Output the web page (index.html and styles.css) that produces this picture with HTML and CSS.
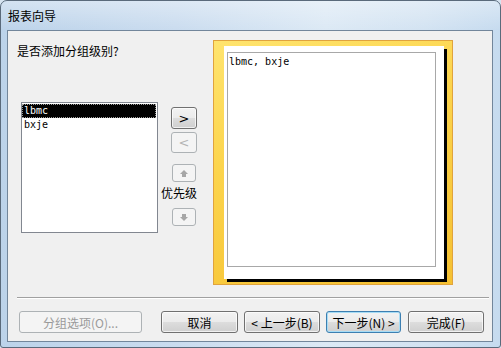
FILE: index.html
```html
<!DOCTYPE html>
<html lang="zh-CN">
<head>
  <meta charset="UTF-8">
  <title>报表向导</title>
  <link rel="stylesheet" href="styles.css">
</head>
<body>
  <div class="window">
    <div class="titlebar">报表向导</div>

    <div class="client">
      <div class="main">
        <!-- Field list and ordering -->
        <div class="left">
          <p class="question">是否添加分组级别?</p>
          <div class="pick">
            <ul class="listbox">
              <li class="sel">lbmc</li>
              <li>bxje</li>
            </ul>
            <div class="order">
              <button class="btn arrow">&gt;</button>
              <button class="btn arrow" disabled>&lt;</button>
              <button class="btn small" disabled>
                <svg width="8" height="7" viewBox="0 0 8 7"><polygon points="4,0 8,4 6,4 6,7 2,7 2,4 0,4" fill="#a6a6a6"/></svg>
              </button>
              <span class="prio">优先级</span>
              <button class="btn small down" disabled>
                <svg width="8" height="7" viewBox="0 0 8 7"><polygon points="4,7 8,3 6,3 6,0 2,0 2,3 0,3" fill="#a6a6a6"/></svg>
              </button>
            </div>
          </div>
        </div>

        <!-- Preview -->
        <div class="preview">
          <div class="page">
            <div class="sheet">lbmc, bxje</div>
          </div>
        </div>
      </div>

      <div class="sep"></div>

      <div class="actions">
        <button class="btn wide" disabled>分组选项(O)...</button>
        <button class="btn cancel">取消</button>
        <button class="btn">&lt; 上一步(B)</button>
        <button class="btn default">下一步(N) &gt;</button>
        <button class="btn finish">完成(F)</button>
      </div>
    </div>
  </div>
</body>
</html>
```

FILE: styles.css
```css
* { box-sizing: border-box; }

body {
  margin: 0;
  background: #d6e4f1;
  font-family: "Noto Sans CJK SC", "Liberation Sans", sans-serif;
  font-size: 12px;
  color: #000;
}

.window {
  width: 501px;
  height: 348px;
  border: 1px solid #5a6a7b;
  border-radius: 7px 7px 3px 3px;
  background: linear-gradient(to right, #bcd3ea 0%, #cadcef 35%, #dce9f5 65%, #d3e3f2 85%, #c6dbef 100%);
  display: flex;
  flex-direction: column;
  overflow: hidden;
}

.titlebar {
  height: 29px;
  padding-left: 7px;
  line-height: 30px;
  font-size: 12px;
  background: linear-gradient(to bottom, rgba(255,255,255,0.35), rgba(255,255,255,0));
}

.client {
  margin-left: 6px;
  width: 486px;
  height: 312px;
  border: 1px solid #72869b;
  background: #f0f0f0;
}

.main {
  height: 266px;
  padding: 9px 0 0 9px;
  display: flex;
}

.left {
  width: 196px;
}

.question {
  margin: 4px 0 0;
  line-height: 14px;
}

.pick {
  margin-top: 44px;
  display: flex;
}

.listbox {
  list-style: none;
  margin: 0 0 0 4px;
  padding: 1px 1px 0 0;
  width: 137px;
  height: 131px;
  border: 1px solid #828790;
  background: #fff;
  font-family: "DejaVu Sans Mono", "Liberation Mono", monospace;
  font-size: 10px;
}

.listbox li {
  height: 14px;
  line-height: 14px;
  padding-left: 2px;
}

.listbox li.sel {
  background: #000;
  color: #fff;
  outline: 1px dotted #9a9a9a;
  outline-offset: -1px;
}

.order {
  margin-left: 3px;
  width: 36px;
  display: flex;
  flex-direction: column;
  align-items: flex-end;
}

.btn {
  height: 22px;
  padding: 0;
  border: 1px solid #707070;
  border-radius: 3px;
  background: linear-gradient(to bottom, #f2f2f2 0%, #ebebeb 50%, #dddddd 51%, #cfcfcf 100%);
  box-shadow: inset 0 0 0 1px rgba(255,255,255,0.7);
  font-family: "Noto Sans CJK SC", "Liberation Sans", sans-serif;
  font-size: 12px;
  color: #000;
  display: flex;
  align-items: center;
  justify-content: center;
}

.btn:disabled {
  border-color: #adb2b5;
  background: #f4f4f4;
  box-shadow: none;
  color: #9a9a9a;
}

.arrow {
  width: 26px;
  margin-top: 5px;
  font-family: "DejaVu Sans", sans-serif;
  font-size: 13px;
}

.arrow:disabled {
  margin-top: 3px;
  height: 21px;
  color: #b4b4b4;
}

.small {
  width: 24px;
  height: 18px;
  margin-top: 11px;
  margin-right: 1px;
}

.small.down {
  margin-top: 8px;
}

.prio {
  align-self: stretch;
  margin-top: 4px;
  line-height: 14px;
}

.preview {
  width: 240px;
  height: 245px;
  border: 1px solid #e0a33e;
  background: linear-gradient(160deg, #ffe46e 0%, #fcd44c 40%, #f5c132 100%);
  padding: 5px 0 0 10px;
}

.page {
  width: 220px;
  height: 233px;
  background: #fff;
  box-shadow: 3px 3px 0 #000;
  padding: 6px 0 0 3px;
}

.sheet {
  width: 209px;
  height: 215px;
  border: 1px solid #a8a8a8;
  padding: 3px 1px;
  font-family: "DejaVu Sans Mono", "Liberation Mono", monospace;
  font-size: 10px;
  line-height: 12px;
}

.sep {
  margin: 0 3px 0 9px;
  height: 2px;
  border-top: 1px solid #a0a0a0;
  border-bottom: 1px solid #fff;
}

.actions {
  margin-top: 12px;
  padding-left: 11px;
  display: flex;
}

.actions .btn {
  width: 76px;
  margin-left: 6px;
}

.actions .wide {
  width: 123px;
  margin-left: 0;
}

.actions .cancel {
  width: 77px;
  margin-left: 19px;
}

.actions .default {
  width: 75px;
  border-color: #3c7fb1;
  box-shadow: inset 0 0 0 1px #a7dcf5;
}

.actions .finish {
  margin-left: 7px;
}
```
